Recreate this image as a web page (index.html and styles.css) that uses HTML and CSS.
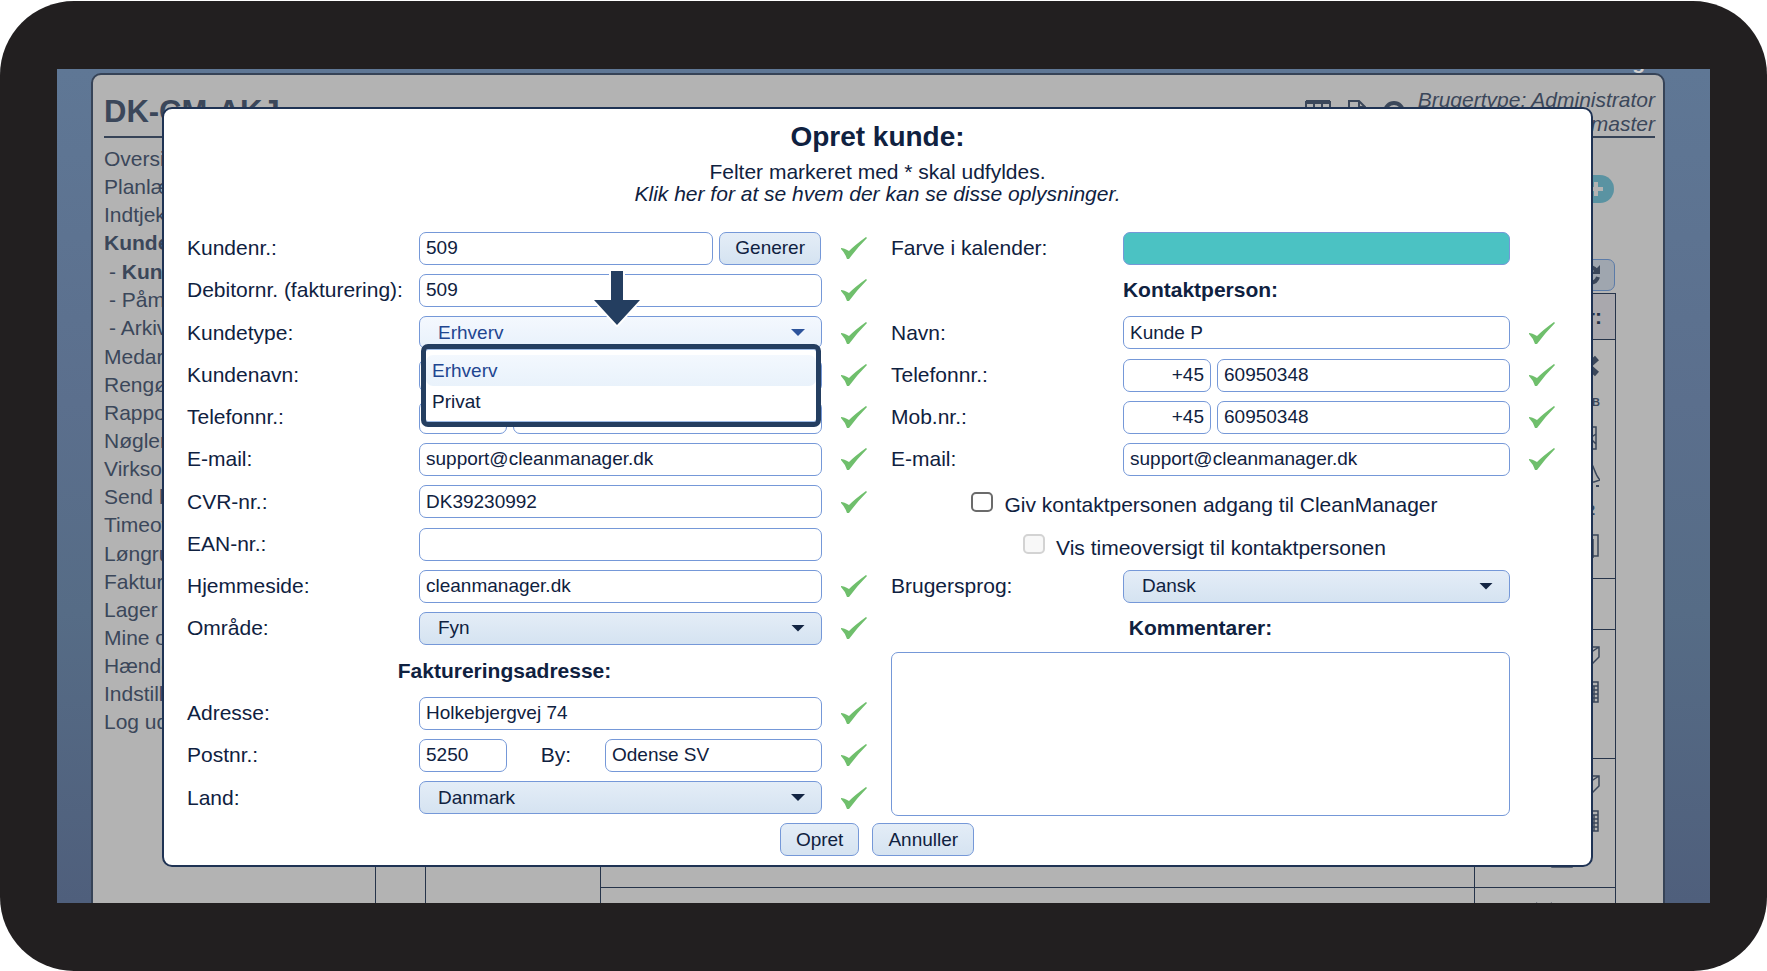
FILE: index.html
```html
<!DOCTYPE html>
<html lang="da">
<head>
<meta charset="utf-8">
<title>Opret kunde</title>
<link rel="stylesheet" href="styles.css">
</head>
<body>
<svg class="defs" aria-hidden="true">
  <symbol id="ok" viewBox="0 0 26 22"><path d="M0 11Q3 11 8 14Q14 8 25 0L26 1Q16 11 8 22H6Q4 16 0 12z" fill="#6fbf6c"/></symbol>
  <symbol id="cube" viewBox="0 0 24 24"><path d="M3 3h20v10l-9 9H3zM14 22V9L23 3M3 9h11" fill="none" stroke="#3b475a" stroke-width="1.5"/></symbol>
  <symbol id="calc" viewBox="0 0 24 24"><path d="M4 2h18v20H4zM4 6h18M4 10h18M4 14h18M4 18h18M10 6v16M14 6v16M18 6v16" fill="none" stroke="#3b475a" stroke-width="1.5"/></symbol>
</svg>
<div class="device">
  <div class="screen">
    <div class="brand">CleanManager</div>
    <div class="page">
      <header class="top">
        <h1>DK-CM-AKJ</h1>
        <div class="top-icons">
          <svg width="26" height="24" viewBox="0 0 26 24"><path d="M1 2h24v21H1zM9 3v20M17 3v20M1 13h24" fill="none" stroke="#3b475a" stroke-width="2"/><path d="M1 2h24" stroke="#3b475a" stroke-width="4"/></svg>
          <svg width="18" height="24" viewBox="0 0 18 24"><path d="M1 1h10l6 6v16H1zM11 1v6h6" fill="none" stroke="#3b475a" stroke-width="2"/></svg>
          <svg width="22" height="24" viewBox="0 0 22 24"><circle cx="11" cy="12" r="9" fill="none" stroke="#3b475a" stroke-width="4"/></svg>
        </div>
        <p class="user">Brugertype: Administrator<br>webmaster</p>
      </header>
      <div class="body">
        <nav>
          <ul class="menu">
            <li>Oversigt</li><li>Planlægning</li><li>Indtjekning</li><li><b>Kunder</b></li>
            <li><ul class="submenu"><li>- <b>Kunder</b></li><li>- Påmindelser</li><li>- Arkiv</li></ul></li>
            <li>Medarbejdere</li><li>Rengøring</li><li>Rapporter</li><li>Nøgler</li><li>Virksomhed</li><li>Send besked</li><li>Timeoversigt</li></ul>
          <ul class="menu">
            <li>Løngrundlag</li><li>Fakturering</li><li>Lager</li><li>Mine oplysninger</li><li>Hændelser</li><li>Indstillinger</li><li>Log ud</li>
          </ul>
        </nav>
        <main>
          <div class="add"><svg width="16" height="16" viewBox="0 0 16 16"><path d="M8 1v14M1 8h14" stroke="#b3b3b3" stroke-width="4"/></svg></div>
          <div class="refresh"><svg width="22" height="22" viewBox="0 0 22 22"><path d="M18 8A8 8 0 0 0 4 7M4 14a8 8 0 0 0 15-1" fill="none" stroke="#3b475a" stroke-width="4"/><path d="M21 1v9h-9z" fill="#3b475a"/></svg></div>
          <table>
            <colgroup><col class="c1"><col class="c2"><col><col class="c4"></colgroup>
            <tr class="head"><th></th><th></th><th></th><th>Handlinger:</th></tr>
            <tr class="r-tall"><td rowspan="5"></td><td rowspan="5"></td><td></td><td>
              <div class="tools">
                <svg width="24" height="24" viewBox="0 0 24 24"><path d="M3 4L21 20M21 4L3 20" stroke="#3b475a" stroke-width="6"/></svg>
                <b>SUB</b>
                <svg width="24" height="24" viewBox="0 0 24 24"><path d="M2 1h18v22H2zM2 8l9 6 9-6M14 12l6 6" fill="none" stroke="#3b475a" stroke-width="1.5"/></svg>
                <svg width="24" height="26" viewBox="0 0 24 26"><path d="M0 18C5 14 4 2 12 1C19 2 17 12 24 19L18 21H2z" fill="none" stroke="#3b475a" stroke-width="1.5"/><path d="M10 23h4M20 25h3" stroke="#3b475a" stroke-width="2"/></svg>
                <b class="two">2</b>
                <svg width="24" height="24" viewBox="0 0 24 24"><path d="M5 1h17v21H5zM17 5v20" fill="none" stroke="#3b475a" stroke-width="1.5"/></svg>
              </div></td></tr>
            <tr class="r-low"><td></td><td></td></tr>
            <tr class="r-mid"><td></td><td><div class="tools"><svg width="24" height="24"><use href="#cube"/></svg><svg width="24" height="24"><use href="#calc"/></svg></div></td></tr>
            <tr class="r-mid"><td></td><td><div class="tools"><svg width="24" height="24"><use href="#cube"/></svg><svg width="24" height="24"><use href="#calc"/></svg><svg class="mid" width="24" height="24" viewBox="0 0 24 24"><path d="M2 2h20v20H2zM12 14v5h6" fill="none" stroke="#3b475a" stroke-width="1.5"/></svg></div></td></tr>
            <tr class="r-mid"><td></td><td><div class="tools"><svg width="100" height="24" viewBox="0 0 100 24"><path d="M5 2h4M36 1l16 16M52 1L36 17M78 3h20v18H78z" fill="none" stroke="#3b475a" stroke-width="2"/></svg></div></td></tr>
          </table>
        </main>
      </div>
    </div>

    <form class="modal" role="dialog" aria-labelledby="title">
      <h2 id="title">Opret kunde:</h2>
      <p class="intro">Felter markeret med * skal udfyldes.<br><i>Klik her for at se hvem der kan se disse oplysninger.</i></p>
      <div class="columns">
        <div class="grid left">
          <label for="nr">Kundenr.:</label>
          <div class="field"><input id="nr" type="text" value="509"><button type="button">Generer</button></div>
          <svg class="ok"><use href="#ok"/></svg>

          <label for="deb">Debitornr. (fakturering):</label>
          <div class="field"><input id="deb" type="text" value="509"></div>
          <svg class="ok"><use href="#ok"/></svg>

          <label for="type">Kundetype:</label>
          <div class="field select open">
            <select id="type"><option>Erhverv</option><option>Privat</option></select>
            <svg class="pointer" width="54" height="60" viewBox="0 0 54 60"><path d="M21 3h12v29h17L27 57L4 32h17z" fill="#243e60" stroke="#fff" stroke-width="4" stroke-linejoin="round" paint-order="stroke"/></svg>
            <ul class="options"><li class="active">Erhverv</li><li>Privat</li></ul>
          </div>
          <svg class="ok"><use href="#ok"/></svg>

          <label for="navn">Kundenavn:</label>
          <div class="field"><input id="navn" type="text"></div>
          <svg class="ok"><use href="#ok"/></svg>

          <label for="tlf">Telefonnr.:</label>
          <div class="field"><input class="short" type="text" aria-label="Landekode"><input id="tlf" type="text"></div>
          <svg class="ok"><use href="#ok"/></svg>

          <label for="mail">E-mail:</label>
          <div class="field"><input id="mail" type="text" value="support@cleanmanager.dk"></div>
          <svg class="ok"><use href="#ok"/></svg>

          <label for="cvr">CVR-nr.:</label>
          <div class="field"><input id="cvr" type="text" value="DK39230992"></div>
          <svg class="ok"><use href="#ok"/></svg>

          <label for="ean">EAN-nr.:</label>
          <div class="field"><input id="ean" type="text"></div>
          <span></span>

          <label for="web">Hjemmeside:</label>
          <div class="field"><input id="web" type="text" value="cleanmanager.dk"></div>
          <svg class="ok"><use href="#ok"/></svg>

          <label for="area">Område:</label>
          <div class="field select"><select id="area"><option>Fyn</option></select></div>
          <svg class="ok"><use href="#ok"/></svg>

          <h3>Faktureringsadresse:</h3><span></span>

          <label for="adr">Adresse:</label>
          <div class="field"><input id="adr" type="text" value="Holkebjergvej 74"></div>
          <svg class="ok"><use href="#ok"/></svg>

          <label for="post">Postnr.:</label>
          <div class="field town"><input id="post" class="short" type="text" value="5250"><label for="by">By:</label><input id="by" type="text" value="Odense SV"></div>
          <svg class="ok"><use href="#ok"/></svg>

          <label for="land">Land:</label>
          <div class="field select"><select id="land"><option>Danmark</option></select></div>
          <svg class="ok"><use href="#ok"/></svg>
        </div>

        <div class="grid right">
          <label for="farve">Farve i kalender:</label>
          <div class="field"><button id="farve" class="swatch" type="button" aria-label="Farve i kalender"></button></div>
          <span></span>

          <h3>Kontaktperson:</h3><span></span>

          <label for="knavn">Navn:</label>
          <div class="field"><input id="knavn" type="text" value="Kunde P"></div>
          <svg class="ok"><use href="#ok"/></svg>

          <label for="ktlf">Telefonnr.:</label>
          <div class="field"><input class="short code" type="text" value="+45" aria-label="Landekode"><input id="ktlf" type="text" value="60950348"></div>
          <svg class="ok"><use href="#ok"/></svg>

          <label for="kmob">Mob.nr.:</label>
          <div class="field"><input class="short code" type="text" value="+45" aria-label="Landekode"><input id="kmob" type="text" value="60950348"></div>
          <svg class="ok"><use href="#ok"/></svg>

          <label for="kmail">E-mail:</label>
          <div class="field"><input id="kmail" type="text" value="support@cleanmanager.dk"></div>
          <svg class="ok"><use href="#ok"/></svg>

          <div class="tick"><input id="adgang" type="checkbox"><label for="adgang">Giv kontaktpersonen adgang til CleanManager</label></div><span></span>
          <div class="tick"><input id="timer" type="checkbox" disabled><label for="timer">Vis timeoversigt til kontaktpersonen</label></div><span></span>

          <label for="sprog">Brugersprog:</label>
          <div class="field select"><select id="sprog"><option>Dansk</option></select></div>
          <span></span>

          <h3 id="komm">Kommentarer:</h3><span></span>
          <textarea aria-labelledby="komm"></textarea>
        </div>
      </div>
      <div class="actions"><button type="submit">Opret</button><button type="button">Annuller</button></div>
    </form>
  </div>
</div>
</body>
</html>
```
FILE: styles.css
```css
* { box-sizing: border-box; }
body {
  margin: 0;
  background: #fff;
  color: #0f2140;
  font: 21px/24px "Liberation Sans", Arial, sans-serif;
  overflow: hidden;
}
h1, h2, h3, p, ul { margin: 0; padding: 0; }
ul { list-style: none; }
.defs { position: absolute; width: 0; height: 0; }

.device {
  height: calc(100vh - 1px);
  margin-top: 1px;
  padding: 68px 57px;
  border-radius: 74px;
  background: #221f20;
}
.screen {
  position: relative;
  height: 100%;
  padding: 4px 45px 0 34px;
  overflow: hidden;
  background: linear-gradient(#5f7795, #5b6f8d 40%, #566c86 65%, #4f5f7c);
}
.brand {
  position: absolute;
  top: -19px;
  right: 45px;
  color: #d0d0d0;
  font-weight: bold;
}

/* Page behind the dialog */
.page {
  height: 900px;
  padding: 0 8px 0 11px;
  border: 2px solid #364357;
  border-radius: 10px;
  background: #b3b3b3;
  color: #3b475a;
}
.top {
  display: flex;
  align-items: center;
  padding-top: 13px;
  border-bottom: 2px solid #364357;
}
.top h1 { flex: 1; font-size: 31px; line-height: 48px; }
.top-icons { display: flex; gap: 17px; margin-right: 13px; }
.user { font-style: italic; text-align: right; }
.body { display: flex; }
nav { display: flex; flex-direction: column; gap: 1px; width: 271px; padding-top: 7px; }
.menu { line-height: 28px; }
.submenu { padding: 1px 0 1px 5px; }
main {
  flex: 1;
  display: flex;
  flex-direction: column;
  align-items: flex-end;
  padding: 37px 39px 0 0;
}
.add {
  display: flex;
  align-items: center;
  justify-content: flex-end;
  width: 120px;
  height: 28px;
  margin-right: 2px;
  padding-right: 10px;
  border-radius: 14px;
  background: #5a93a2;
}
.refresh {
  display: flex;
  align-items: center;
  height: 32px;
  margin: 56px 1px 2px 0;
  padding: 0 13px;
  border: 1px solid #5b7ba8;
  border-radius: 7px;
  background: #9fa6af;
}
table { width: 100%; border-collapse: collapse; table-layout: fixed; }
th, td { padding: 0; border: 1px solid #26344a; vertical-align: top; }
.c1 { width: 50px; }
.c2 { width: 175px; }
.c4 { width: 141px; }
.head { height: 46px; background: #a9a8ad; }
.head th { padding-right: 13px; text-align: right; vertical-align: middle; color: #26344a; }
.r-tall { height: 239px; }
.r-low { height: 51px; }
.r-mid { height: 129px; }
.tools {
  display: grid;
  grid-auto-rows: 36px;
  align-items: center;
  justify-items: end;
  padding: 8px 15px 0 0;
  font-size: 11px;
}
.tools .two { padding-right: 5px; font-size: 14px; }
.tools .mid { margin-right: 26px; }

/* Dialog */
.modal {
  position: absolute;
  top: 38px;
  left: 105px;
  right: 117px;
  padding: 13px 0 9px 23px;
  border: 2px solid #1f3354;
  border-radius: 10px;
  background: #fff;
}
.modal h2 { padding-right: 23px; font-size: 28px; line-height: 30px; text-align: center; }
.intro { margin: 9px 0 22px; padding-right: 23px; line-height: 22px; text-align: center; }
.columns { display: grid; grid-template-columns: 704fr 700fr; }
.grid {
  display: grid;
  grid-template-rows: repeat(3, 42px 42px 43px 42px) 42px 43px;
  align-items: center;
}
.left { grid-template-columns: 232px minmax(0, 1fr) 69px; }
.right { grid-template-columns: 232px minmax(0, 1fr) 81px; }
.grid h3 { grid-column: span 2; font-size: 21px; text-align: center; }
.field { position: relative; display: flex; align-items: center; gap: 6px; }
input[type="text"], select, textarea, button {
  height: 33px;
  border: 1px solid #7598d8;
  border-radius: 7px;
  background: #fff;
  color: #0f2140;
  font: 19px/24px "Liberation Sans", Arial, sans-serif;
}
input[type="text"] { flex: 1; min-width: 0; padding: 0 6px; }
input.short { flex: 0 0 88px; }
input.code { text-align: right; }
button, select { background: linear-gradient(#e4edf7, #d5e3f1); }
button { padding: 0 15px; }
.field button { margin-right: 1px; }
.field .swatch { flex: 1; margin: 0; background: #4bc2c3; }
select { flex: 1; padding: 0 18px; appearance: none; }
.select::after {
  content: "";
  position: absolute;
  right: 17px;
  width: 14px;
  height: 7px;
  background: #132543;
  clip-path: polygon(0 0, 100% 0, 50% 100%);
}
.open select { background: linear-gradient(#f4f8fe, #e8f1fb); color: #1f4690; }
.open::after { background: #2c539b; }
.pointer { position: absolute; z-index: 3; left: 171px; bottom: 21px; }
.options {
  position: absolute;
  z-index: 2;
  top: 28px;
  left: 2px;
  right: 1px;
  padding: 6px 0 5px;
  border: 5px solid #243e60;
  border-radius: 7px;
  background: #fff;
  box-shadow: inset 0 1px #9dbbe6, inset 0 -1px #9dbbe6;
  font-size: 19px;
}
.options li { padding: 0 6px; line-height: 31px; }
.options .active {
  border-radius: 7px;
  background: linear-gradient(#f3f8fe, #e9f2fb);
  color: #1f4690;
}
.ok { width: 26px; height: 22px; margin-left: 19px; }
.town { gap: 0; }
.town label { width: 98px; text-align: center; }
.tick {
  grid-column: span 2;
  display: flex;
  justify-content: center;
  align-items: center;
  gap: 11px;
  padding-left: 8px;
}
.tick label { padding-top: 7px; }
.tick input {
  width: 22px;
  height: 20px;
  margin: 0;
  border: 2px solid #6b6b6b;
  border-radius: 5px;
  background: #fff;
  appearance: none;
}
.tick input:disabled { border-color: #d3d3d3; background: #f8f8f8; }
.right textarea {
  grid-column: span 2;
  grid-row: span 4;
  align-self: stretch;
  height: auto;
  margin: 3px 0;
  padding: 6px;
  resize: none;
}
.actions { display: flex; justify-content: center; gap: 13px; margin-top: 4px; padding-right: 24px; }
```
